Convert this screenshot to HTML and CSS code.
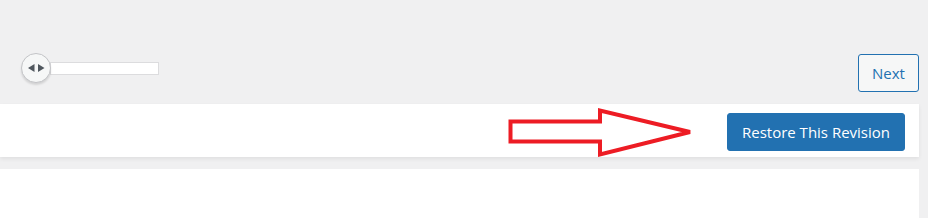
FILE: index.html
```html
<!DOCTYPE html>
<html lang="en">

<head>
  <meta charset="UTF-8">
  <meta name="viewport" content="width=device-width, initial-scale=1.0">
  <title>Revisions</title>
  <link rel="stylesheet" href="styles.css">
</head>

<body>
  <div class="revisions">
    <div class="revisions-controls">
      <div class="slider">
        <div class="slider-handle">
          <svg width="17" height="8" viewBox="0 0 17 8">
            <polygon points="6.5,0 6.5,8 0,4" fill="#50575e" />
            <polygon points="10,0 10,8 16.5,4" fill="#50575e" />
          </svg>
        </div>
        <div class="slider-track"></div>
      </div>
      <button class="btn-next">Next</button>
    </div>

    <div class="revisions-meta">
      <button class="btn-restore">Restore This Revision</button>
    </div>

    <div class="revisions-diff"></div>
  </div>

  <!-- annotation -->
  <svg class="arrow" width="928" height="218" viewBox="0 0 928 218">
    <polygon points="510.5,121.5 600,121.5 600,110.5 690,132 600,154.5 600,141.5 510.5,141.5"
      fill="none" stroke="#ed1c24" stroke-width="4" stroke-linejoin="miter" />
  </svg>
</body>

</html>
```

FILE: styles.css
```css
body {
  margin: 0px;
  background-color: #f0f0f1;
  font-family: "Open Sans", "Noto Sans", sans-serif;
  height: 218px;
  overflow: hidden;
}

.revisions {
  padding-right: 9px;
}

.revisions-controls {
  display: flex;
  justify-content: space-between;
  align-items: flex-start;
  height: 104px;
  box-sizing: border-box;
  padding: 53px 0 0 21px;
}

.slider {
  display: flex;
  align-items: center;
}

.slider-handle {
  width: 28px;
  height: 28px;
  border-radius: 50%;
  border: 1px solid #c3c4c7;
  background-color: #f6f7f7;
  box-shadow: 0 2px 2px rgba(0, 0, 0, 0.12);
  display: flex;
  justify-content: center;
  align-items: center;
  position: relative;
  z-index: 1;
}

.slider-track {
  width: 107px;
  height: 11px;
  margin-left: -1px;
  background-color: #fff;
  border: 1px solid #dcdcde;
}

.btn-next {
  margin-top: 1px;
  width: 61px;
  height: 38px;
  border: 1px solid #2271b1;
  border-radius: 3px;
  background-color: #f6f7f7;
  color: #2271b1;
  font-family: inherit;
  font-size: 15px;
  padding: 0;
}

.revisions-meta {
  height: 53px;
  box-sizing: border-box;
  background-color: #fff;
  box-shadow: 0 2px 4px rgba(0, 0, 0, 0.07);
  display: flex;
  justify-content: flex-end;
  align-items: flex-start;
  padding: 9px 14px 0 0;
}

.btn-restore {
  width: 178px;
  height: 38px;
  border: 1px solid #2271b1;
  border-radius: 3px;
  background-color: #2271b1;
  color: #fff;
  font-family: inherit;
  font-size: 15px;
  padding: 0;
}

.revisions-diff {
  margin-top: 12px;
  height: 49px;
  background-color: #fff;
}

.arrow {
  position: absolute;
  left: 0;
  top: 0;
  pointer-events: none;
}
```
